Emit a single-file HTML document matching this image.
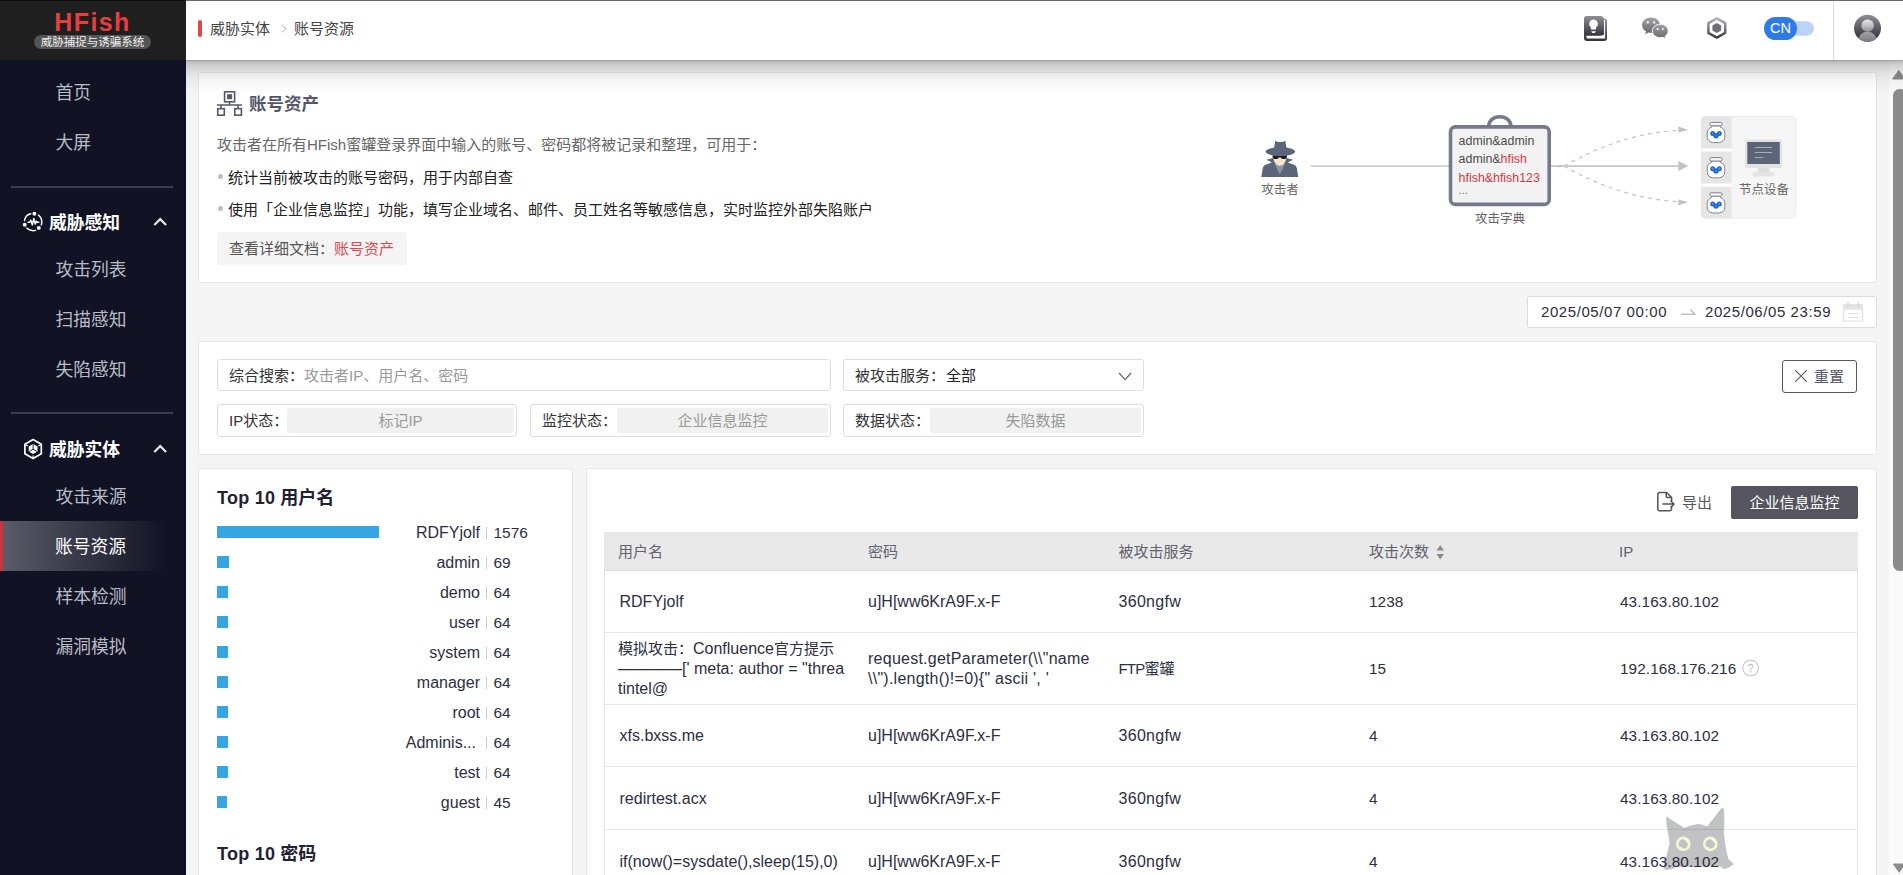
<!DOCTYPE html>
<html lang="zh-CN">
<head>
<meta charset="utf-8">
<title>HFish</title>
<style>
*{box-sizing:border-box;margin:0;padding:0}
html,body{width:1903px;height:875px;overflow:hidden;background:#f5f5f5;font-family:"Liberation Sans","Noto Sans CJK SC",sans-serif;color:#333}
.abs{position:absolute}
/* sidebar */
#side{position:absolute;left:0;top:0;width:186px;height:875px;background:#111223;z-index:5}
#logo{position:absolute;left:0;top:0;width:186px;height:60px;background:#1f1f1f;border-top:1px solid #0d0d0d}
#logo .t{position:absolute;left:-0.5px;width:186px;top:6px;text-align:center;color:#e83e3e;font-weight:bold;font-size:25px;letter-spacing:1.4px;line-height:30px;padding-left:0}
#logo .s{position:absolute;left:34px;top:34.300px;width:117px;height:14px;border-radius:7px;background:#545454;color:#f2f2f2;font-size:11.5px;line-height:14px;text-align:center;white-space:nowrap}
.mi{position:absolute;left:0;width:186px;height:50px;line-height:53px;padding-left:55.500px;font-size:17.800px;color:#b9bcc8;white-space:nowrap}
.mi.act{color:#fff;background:linear-gradient(90deg,#5a5b68 0%,#111223 89%);border-left:3px solid #cc343b;padding-left:52px}
.sep{position:absolute;left:11px;width:162px;height:2px;background:#3b3d4d}
.mh{position:absolute;left:49px;font-size:17.8px;font-weight:bold;color:#fff;line-height:25px;white-space:nowrap}
/* header */
#hdr{position:absolute;left:186px;top:0;width:1717px;height:60px;background:#fff;z-index:4;border-top:1px solid #6a6a6a}
#hdr .bar{position:absolute;left:12px;top:19px;width:4px;height:17px;border-radius:2px;background:#e64545}
#hdr .bc{position:absolute;top:17px;font-size:15px;line-height:22px;color:#444;white-space:nowrap}
/* content */
.sh{position:absolute;left:1px;top:0;right:0;bottom:0}
.card{position:absolute;background:#fff;border:1px solid #e6e6e6;border-radius:3px}

/* card1 */
#c1 .ttl{position:absolute;left:49px;top:18px;font-size:17.5px;font-weight:bold;color:#53576a;line-height:26px;white-space:nowrap}
#c1 .p{position:absolute;left:17px;font-size:15px;line-height:22px;color:#666;white-space:nowrap}
#c1 .li{position:absolute;left:28px;font-size:15px;line-height:22px;color:#222;white-space:nowrap}
#c1 .dot{position:absolute;left:18px;width:5px;height:5px;border-radius:50%;background:#bdbdbd}
#c1 .doc{position:absolute;left:17px;top:159px;width:190px;height:33px;background:#f4f4f4;border-radius:3px;font-size:15px;line-height:33px;padding-left:12px;color:#555;white-space:nowrap}
#c1 .doc span{color:#e0484d}
.dl{position:absolute;font-size:12.5px;line-height:16px;color:#666;white-space:nowrap;text-align:center}
/* date */
#date{position:absolute;left:1527px;top:296px;width:350px;height:32px;background:#fff;border:1px solid #dcdcdc;border-radius:3px}
#date .d{position:absolute;top:4px;font-size:15px;line-height:22px;color:#2b2e3b;white-space:nowrap;letter-spacing:.58px}
/* filters */
.fb{position:absolute;height:33px;border:1px solid #dedede;border-radius:3px;background:#fff;font-size:15px;line-height:31px;white-space:nowrap;color:#333}
.fb .lb{position:absolute;left:11px;top:0}
.fb .ph{position:absolute;top:0;color:#999}
.fb .in{position:absolute;top:3px;height:25px;background:#f1f1f1;border-radius:3px;color:#999;text-align:center;line-height:25.500px}
#reset{position:absolute;left:1582px;top:17px;width:75px;height:33px;border:1px solid #55566a;border-radius:3px;font-size:15px;line-height:31px;color:#53566a;white-space:nowrap}
/* chart */
#c3 .h{position:absolute;left:17px;font-size:18px;font-weight:bold;color:#1f2233;line-height:26px;white-space:nowrap}
.br{position:absolute;left:17px;height:12px;background:#38a5e3}
.tl{letter-spacing:.25px}
.bl{position:absolute;left:149px;width:131px;text-align:right;font-size:16px;line-height:22px;color:#2b2f42;white-space:nowrap}
.bs{position:absolute;left:286px;width:1px;height:12px;background:#ccc}
.bv{position:absolute;left:293.500px;font-size:15.500px;line-height:22px;color:#2b2f42;white-space:nowrap}
/* table */
#tbl{position:absolute;left:17px;top:63px;width:1254px;border:1px solid #e6e6e6;border-bottom:none}
.tr{position:absolute;left:0;width:1252px;border-bottom:1px solid #e6e6e6}
.th{background:#e9e9e9;height:38px;top:0;border-bottom-color:#dedede}
.td{position:absolute;font-size:15px;line-height:20px;color:#2b2f42;white-space:nowrap}
.th .td{color:#5f6270;top:8.500px}
.la{font-size:16px}
.nu{font-size:15.300px;letter-spacing:.1px}
#exp{position:absolute;left:1095px;top:22.700px;font-size:15px;line-height:22px;color:#555;white-space:nowrap}
#mon{position:absolute;left:1144px;top:17px;width:127px;height:33px;background:#555560;border-radius:2px;color:#fff;font-size:15px;line-height:33px;text-align:center;white-space:nowrap}
</style>
</head>
<body>
<div id="side">
  <div id="logo"><div class="t">HFish</div><div class="s">威胁捕捉与诱骗系统</div></div>

  <svg class="abs" style="left:20px;top:208px" width="28" height="28" viewBox="20 208 28 28">
    <circle cx="33.1" cy="222" r="8.7" fill="none" stroke="#fff" stroke-width="1.4" stroke-dasharray="3.500 7 10.560 7 10.840 7 8.800"/>
    <circle cx="34.400" cy="213.800" r="1.950" fill="#fff"/><circle cx="24.700" cy="224.800" r="1.950" fill="#fff"/><circle cx="38.800" cy="227.900" r="1.950" fill="#fff"/>
    <path d="M28 222.3h1.8l1-2.2 1.5 4.8 1.5-6.4 1.5 5.6 1.1-2.8.8 1h1.6" fill="none" stroke="#fff" stroke-width="1.5" stroke-linejoin="round" stroke-linecap="round"/>
  </svg>
  <svg class="abs" style="left:20px;top:436px" width="28" height="28" viewBox="20 436 28 28">
    <path d="M33.1 439.6l8.2 4.7v9.5l-8.2 4.7-8.2-4.7v-9.5z" fill="none" stroke="#fff" stroke-width="1.7" stroke-linejoin="round"/>
    <path d="M33.1 444l4.4 2.5v5.1l-4.4 2.5-4.4-2.5v-5.1z" fill="#fff"/>
    <path d="M33.1 444.2v5l-4 2.3M33.1 449.2l4 2.3" fill="none" stroke="#111223" stroke-width="0.9"/>
    <path d="M25.5 444.7l2.4 1.4M40.7 444.7l-2.4 1.4M33.1 458v-2.6" stroke="#fff" stroke-width="1.2"/>
  </svg>
  <svg class="abs" style="left:150px;top:214px" width="20" height="16" viewBox="150 214 20 16"><path d="M154.3 225l5.9-5.9 5.9 5.9" fill="none" stroke="#e6e6ea" stroke-width="2.2"/></svg>
  <svg class="abs" style="left:150px;top:441px" width="20" height="16" viewBox="150 441 20 16"><path d="M154.3 452l5.9-5.9 5.9 5.9" fill="none" stroke="#e6e6ea" stroke-width="2.2"/></svg>
  <div class="mi" style="top:67px">首页</div>
  <div class="mi" style="top:117px">大屏</div>
  <div class="sep" style="top:186px"></div>
  <div class="mh" style="top:210.500px">威胁感知</div>
  <div class="mi" style="top:244px">攻击列表</div>
  <div class="mi" style="top:294px">扫描感知</div>
  <div class="mi" style="top:344px">失陷感知</div>
  <div class="sep" style="top:412px"></div>
  <div class="mh" style="top:437.500px">威胁实体</div>
  <div class="mi" style="top:471px">攻击来源</div>
  <div class="mi act" style="top:521px">账号资源</div>
  <div class="mi" style="top:571px">样本检测</div>
  <div class="mi" style="top:621px">漏洞模拟</div>
</div>
<div id="hdr">
  <div class="bar"></div>
  <div class="bc" style="left:24px">威胁实体</div>
  <div class="bc" style="left:108px">账号资源</div>
  <svg class="abs" style="left:84px;top:-1px" width="40" height="60" viewBox="270 0 40 60"><path d="M281.600 24.700l4.400 3.800-4.400 3.800" fill="none" stroke="#c8c8c8" stroke-width="1.100"/></svg>
  <svg class="abs" style="left:1390px;top:-1px" width="327" height="60" viewBox="1576 0 327 60">
    <defs>
      <linearGradient id="g1" x1="0" y1="0" x2="0" y2="1"><stop offset="0" stop-color="#8e8e92"/><stop offset="1" stop-color="#33333d"/></linearGradient>
      <linearGradient id="g2" x1="0" y1="0" x2="0" y2="1"><stop offset="0" stop-color="#a3a3a5"/><stop offset="1" stop-color="#66666c"/></linearGradient>
      <linearGradient id="g3" x1="0" y1="0" x2="0" y2="1"><stop offset="0" stop-color="#b4b4b6"/><stop offset="1" stop-color="#3c3c44"/></linearGradient>
      <linearGradient id="g4" x1="0" y1="0" x2="0" y2="1"><stop offset="0" stop-color="#909094"/><stop offset="1" stop-color="#25252f"/></linearGradient>
      <linearGradient id="g5" x1="0" y1="0" x2="0" y2="1"><stop offset="0" stop-color="#ececee"/><stop offset="1" stop-color="#8f8f96"/></linearGradient>
      <linearGradient id="g6" x1="0" y1="0" x2="0" y2="1"><stop offset="0" stop-color="#a2a2a6"/><stop offset="1" stop-color="#55555d"/></linearGradient>
      <clipPath id="av"><circle cx="1867.5" cy="28.3" r="13.5"/></clipPath>
    </defs>
    <!-- book -->
    <rect x="1584" y="18.600" width="23" height="22.400" rx="3" fill="url(#g1)"/>
    <path d="M1586.600 35h17.500v-15h1v18.600h-17.500a1 1 0 0 1 -1-1z" fill="#fff"/>
    <rect x="1584" y="16" width="19.400" height="19.800" rx="2.800" fill="url(#g1)"/>
    <path d="M1593.5 19.5a4.4 4.4 0 0 1 2.6 7.9v2.2h-5.2v-2.2a4.4 4.4 0 0 1 2.6-7.9zM1591.2 31.2h4.6l-1 1.8h-2.6z" fill="#fff"/>
    <!-- wechat -->
    <path d="M1651 17.6c5 0 9 3.4 9 7.6s-4 7.6-9 7.6c-.9 0-1.800-.1-2.600-.300l-3.200 1.800.800-2.900c-2.400-1.400-4-3.600-4-6.200 0-4.200 4-7.600 9-7.600z" fill="url(#g2)"/>
    <path d="M1660.300 24.200c4.400 0 8 3 8 6.800 0 2.200-1.300 4.200-3.300 5.400l.700 2.500-2.800-1.500c-.8.200-1.700.300-2.600.300-4.400 0-8-3-8-6.700s3.600-6.800 8-6.800z" fill="url(#g2)" stroke="#fff" stroke-width="1"/>
    <circle cx="1647.800" cy="22.500" r="1.150" fill="#fff"/><circle cx="1654.200" cy="22.500" r="1.150" fill="#fff"/>
    <circle cx="1657.600" cy="29" r="1" fill="#fff"/><circle cx="1662.900" cy="29" r="1" fill="#fff"/>
    <!-- hexagon -->
    <path d="M1716.800 18.300l8.400 4.800v9.700l-8.400 4.800-8.400-4.800v-9.700z" fill="none" stroke="url(#g3)" stroke-width="2.500" stroke-linejoin="round"/>
    <path d="M1716.800 22.900l4.400 2.550v5.100l-4.400 2.550-4.400-2.550v-5.100z" fill="#6e6e74"/>
    <!-- toggle -->
    <rect x="1780" y="21.300" width="34" height="14.400" rx="7.200" fill="#bdd3f5"/>
    <rect x="1764" y="17" width="33" height="23" rx="11.500" fill="#2f7be6"/>
    <text x="1780.500" y="33.300" font-family="Liberation Sans, sans-serif" font-size="14.500" fill="#fff" text-anchor="middle">CN</text>
    <!-- divider -->
    <rect x="1833" y="1" width="1" height="59" fill="#dedede"/>
    <!-- avatar -->
    <circle cx="1867.500" cy="28.300" r="13.500" fill="url(#g4)"/>
    <g clip-path="url(#av)"><ellipse cx="1867.500" cy="41.500" rx="9.600" ry="10" fill="url(#g6)"/></g>
    <circle cx="1867.600" cy="25.700" r="6.200" fill="url(#g5)"/>
  </svg>

</div>
<div class="abs" style="left:186px;top:60px;width:1717px;height:40px;z-index:8;pointer-events:none;background:linear-gradient(to bottom,rgba(0,0,0,.40) 0,rgba(0,0,0,.25) 1.2px,rgba(0,0,0,.215) 2.5px,rgba(0,0,0,.155) 6px,rgba(0,0,0,.10) 11px,rgba(0,0,0,.075) 14px,rgba(0,0,0,.043) 20px,rgba(0,0,0,.012) 30px,rgba(0,0,0,0) 38px)"></div>
<div class="abs" style="left:186px;top:60px;width:3px;height:815px;background:#f3f5f8"></div>
<div id="main">
  <div class="card" id="c1" style="left:198px;top:72px;width:1679px;height:211px"><div class="sh">
    <div class="ttl">账号资产</div>
    <div class="p" style="top:61px">攻击者在所有HFish蜜罐登录界面中输入的账号、密码都将被记录和整理，可用于：</div>
    <div class="dot" style="top:100.5px"></div><div class="li" style="top:94px">统计当前被攻击的账号密码，用于内部自查</div>
    <div class="dot" style="top:133px"></div><div class="li" style="top:126px">使用「企业信息监控」功能，填写企业域名、邮件、员工姓名等敏感信息，实时监控外部失陷账户</div>
    <div class="doc">查看详细文档：<span>账号资产</span></div>

    <svg class="abs" style="left:1040px;top:32px" width="580" height="125" viewBox="1240 105 580 125">
      <!-- attacker -->
      <path d="M1261.300 177.100l1.500-9.200q.400-2.300 2.800-3.200l6.300-2.300-5.400-2.700 6.500-1.700 6.800 6.800 6.800-6.800 6.500 1.700-5.400 2.700 6.300 2.300q2.400.900 2.800 3.200l1.500 9.200z" fill="#5b6579"/>
      <path d="M1274.500 163.800l5.300 10.800 5.300-10.800z" fill="#8c95a8"/>
      <path d="M1273.200 156.500c0 5 2.800 9.200 6.600 9.200s6.600-4.200 6.600-9.200z" fill="#f4e4c9"/>
      <path d="M1272.600 155.300h14.400v1.400c0 1.500-1.200 2.400-3 2.400-1.500 0-2.600-.600-3.300-1.700h-1.800c-.700 1.100-1.800 1.700-3.300 1.700-1.800 0-3-.900-3-2.400z" fill="#1e1e24"/>
      <ellipse cx="1280.400" cy="151.600" rx="14.700" ry="4.400" fill="#5b6579"/>
      <path d="M1273.600 151l1.700-10.200 2.600 1.200h4.800l2.600-1.200 1.800 10.200z" fill="#5b6579"/>
      <!-- lines -->
      <path d="M1310.800 166.100H1449" stroke="#cdcdcd" stroke-width="1.600"/>
      <path d="M1551 166.100H1679" stroke="#c6c6c6" stroke-width="1.600"/>
      <path d="M1678.300 161.100l10 5-10 5z" fill="#c2c2c2"/>
      <rect x="1558.600" y="165" width="2.200" height="2.200" fill="#c2c2c2"/>
      <path d="M1564 166.100Q1622 133 1678 130.600" fill="none" stroke="#c4c4c4" stroke-width="1.200" stroke-dasharray="4 4.200"/>
      <path d="M1564 166.100Q1622 199 1678 201.400" fill="none" stroke="#c4c4c4" stroke-width="1.200" stroke-dasharray="4 4.200"/>
      <path d="M1678.300 126.600l10 3.400-10 2.400z" fill="#c2c2c2"/>
      <path d="M1678.300 205.400l10-3.400-10-2.400z" fill="#c2c2c2"/>
      <!-- dictionary -->
      <path d="M1488.800 126c0-5.600 4.600-9.200 11-9.200s11 3.600 11 9.200" fill="none" stroke="#747a8b" stroke-width="3.600"/>
      <rect x="1450.500" y="126.900" width="98.700" height="77.500" rx="5" fill="#f2f2f2" stroke="#747a8b" stroke-width="3.600"/>
      <g font-family="Liberation Sans, sans-serif" font-size="12.400">
        <text x="1458.600" y="144.800" fill="#4a4a4a">admin&amp;admin</text>
        <text x="1458.600" y="163.400" fill="#4a4a4a">admin&amp;<tspan fill="#d9363e">hfish</tspan></text>
        <text x="1458.600" y="182.200" fill="#d9363e">hfish&amp;hfish123</text>
        <text x="1458.600" y="193.600" fill="#666" font-size="11">...</text>
      </g>
      <!-- nodes -->
      <rect x="1701.500" y="116.500" width="94.200" height="101.700" rx="4" fill="#f6f6f6" stroke="#ebebeb" stroke-width="1"/>
      <path d="M1705 116.300h26.500v32.200h-30.300v-28.400a3.800 3.800 0 0 1 3.800-3.800z" fill="#e6e6e6"/>
      <rect x="1701.200" y="151.400" width="30.300" height="32.200" fill="#e6e6e6"/>
      <path d="M1701.200 186.800h30.300v31.600h-26.500a3.800 3.800 0 0 1 -3.800-3.800z" fill="#e6e6e6"/>
      <rect x="1701" y="148.600" width="30.500" height="2.700" fill="#fff"/><rect x="1701" y="183.700" width="30.500" height="2.900" fill="#fff"/>
      <g transform="translate(1716 132.400)">
      <path d="M-4.400 -6.600h8.800v1.400c3 1 4.400 3.200 4.400 6v3c0 4-2.600 6.400-6.400 6.400h-4.800c-3.800 0-6.400-2.400-6.400-6.400v-3c0-2.800 1.400-5 4.400-6z" fill="#fff" stroke="#80838b" stroke-width="1"/>
      <rect x="-6" y="-10" width="12" height="3.400" rx="1.200" fill="#f6f6f6" stroke="#80838b" stroke-width="1"/>
      <circle cx="-3.300" cy="1.100" r="2.500" fill="#2364cf"/><circle cx="3.300" cy="1.100" r="2.500" fill="#2364cf"/><circle cx="0" cy="3.300" r="2.700" fill="#2364cf"/>
      <circle cx="-3.300" cy="1.100" r="1.100" fill="#4d92f2"/><circle cx="3.300" cy="1.100" r="1.100" fill="#4d92f2"/><circle cx="0" cy="3.300" r="1.100" fill="#3b7fe6"/>
    </g> <g transform="translate(1716 167.600)">
      <path d="M-4.400 -6.600h8.800v1.400c3 1 4.400 3.200 4.400 6v3c0 4-2.600 6.400-6.400 6.400h-4.800c-3.800 0-6.400-2.400-6.400-6.400v-3c0-2.800 1.400-5 4.400-6z" fill="#fff" stroke="#80838b" stroke-width="1"/>
      <rect x="-6" y="-10" width="12" height="3.400" rx="1.200" fill="#f6f6f6" stroke="#80838b" stroke-width="1"/>
      <circle cx="-3.300" cy="1.100" r="2.500" fill="#2364cf"/><circle cx="3.300" cy="1.100" r="2.500" fill="#2364cf"/><circle cx="0" cy="3.300" r="2.700" fill="#2364cf"/>
      <circle cx="-3.300" cy="1.100" r="1.100" fill="#4d92f2"/><circle cx="3.300" cy="1.100" r="1.100" fill="#4d92f2"/><circle cx="0" cy="3.300" r="1.100" fill="#3b7fe6"/>
    </g> <g transform="translate(1716 202.800)">
      <path d="M-4.400 -6.600h8.800v1.400c3 1 4.400 3.200 4.400 6v3c0 4-2.600 6.400-6.400 6.400h-4.800c-3.800 0-6.400-2.400-6.400-6.400v-3c0-2.800 1.400-5 4.400-6z" fill="#fff" stroke="#80838b" stroke-width="1"/>
      <rect x="-6" y="-10" width="12" height="3.400" rx="1.200" fill="#f6f6f6" stroke="#80838b" stroke-width="1"/>
      <circle cx="-3.300" cy="1.100" r="2.500" fill="#2364cf"/><circle cx="3.300" cy="1.100" r="2.500" fill="#2364cf"/><circle cx="0" cy="3.300" r="2.700" fill="#2364cf"/>
      <circle cx="-3.300" cy="1.100" r="1.100" fill="#4d92f2"/><circle cx="3.300" cy="1.100" r="1.100" fill="#4d92f2"/><circle cx="0" cy="3.300" r="1.100" fill="#3b7fe6"/>
    </g>
      <!-- monitor -->
      <rect x="1745" y="139.600" width="37" height="28.300" rx="1.500" fill="#e3e3e3"/>
      <rect x="1747.300" y="142" width="32.500" height="22" fill="#5c6477"/>
      <path d="M1754.800 147.500h17.500M1754.800 152.500h17.500M1754.800 157.600h8.600" stroke="#a9aebb" stroke-width="1"/>
      <rect x="1757.800" y="167.800" width="11.800" height="5" fill="#dedede"/>
      <rect x="1752.400" y="172" width="22.400" height="4.400" rx="2.200" fill="#e3e3e3"/>
    </svg>
    <svg class="abs" style="left:15px;top:16px" width="30" height="30" viewBox="215 89 30 30">
      <g fill="none" stroke="#555866" stroke-width="1.600">
        <rect x="224.600" y="91.800" width="10" height="10"/>
        <rect x="217.700" y="108.700" width="6.600" height="6.500"/>
        <rect x="234.800" y="108.700" width="6.600" height="6.500"/>
        <path d="M216.900 105h25.100M229.600 102v3M221 105v3.700M238.100 105v3.700"/>
      </g>
      <rect x="227.100" y="94.200" width="5" height="5" fill="#555866"/>
    </svg>
    <div class="dl" style="left:1050px;top:109.4px;width:60px">攻击者</div>
    <div class="dl" style="left:1260px;top:138.2px;width:80px">攻击字典</div>
    <div class="dl" style="left:1524px;top:108.5px;width:80px">节点设备</div>
  </div></div>
  <div id="date"><div class="d" style="left:13px">2025/05/07 00:00</div><div class="d" style="left:177px">2025/06/05 23:59</div><svg class="abs" style="left:150px;top:0" width="190" height="30" viewBox="1678 297 190 30">
    <path d="M1680.800 314.300h13.900l-4.200-4.700" fill="none" stroke="#c2c2c2" stroke-width="1.500"/>
    <rect x="1843.700" y="304.500" width="18.800" height="16.600" fill="#fff" stroke="#dcdcdc" stroke-width="1"/>
    <rect x="1843.200" y="304" width="19.800" height="5.700" fill="#e4e4e4"/>
    <rect x="1847.300" y="302" width="1.400" height="5" fill="#d8d8d8"/><rect x="1857.600" y="302" width="1.400" height="5" fill="#d8d8d8"/>
    <path d="M1847.900 313.700h10.400M1847.900 317.500h10.400" stroke="#dcdcdc" stroke-width="1.100"/>
  </svg></div>
  <div class="card" id="c2" style="left:198px;top:341px;width:1679px;height:114px"><div class="sh" style="top:1px">
    <div class="fb" style="left:17px;top:16px;width:614px;height:32px"><span class="lb">综合搜索：</span><span class="ph" style="left:86px">攻击者IP、用户名、密码</span></div>
    <div class="fb" style="left:643px;top:16px;width:301px;height:32px"><span class="lb">被攻击服务：</span><span class="ph" style="left:102px;color:#222">全部</span><svg class="abs" style="left:268.500px;top:7.500px" width="20" height="14" viewBox="1113 367 20 14"><path d="M1119.100 372l6 6.600 6-6.600" fill="none" stroke="#666" stroke-width="1.200"/></svg></div>
    <div class="fb" style="left:17px;top:61px;width:300px"><span class="lb">IP状态：</span><div class="in" style="left:69px;width:227px">标记IP</div></div>
    <div class="fb" style="left:330px;top:61px;width:301px"><span class="lb">监控状态：</span><div class="in" style="left:86px;width:211px">企业信息监控</div></div>
    <div class="fb" style="left:643px;top:61px;width:301px"><span class="lb">数据状态：</span><div class="in" style="left:86px;width:211px">失陷数据</div></div>
    <div id="reset"><svg class="abs" style="left:10px;top:7px" width="16" height="16" viewBox="1793 368 16 16"><path d="M1795.200 370.200l11.600 11.600M1806.800 370.200l-11.600 11.600" stroke="#55566a" stroke-width="1.100"/></svg><span style="position:absolute;left:31px">重置</span></div>
  </div></div>
  <div class="card" id="c3" style="left:198px;top:468px;width:375px;height:420px"><div class="sh">
    <div class="h" style="top:16px"><span class="tl">Top 10</span> 用户名</div>
    <div class="h" style="top:372px"><span class="tl">Top 10</span> 密码</div>
    <div class="br" style="top:57px;width:162px"></div><div class="bl" style="top:53px"><span class="la">RDFYjolf</span></div><div class="bs" style="top:58px"></div><div class="bv" style="top:53px">1576</div>
    <div class="br" style="top:87px;width:12px"></div><div class="bl" style="top:83px">admin</div><div class="bs" style="top:88px"></div><div class="bv" style="top:83px">69</div>
    <div class="br" style="top:117px;width:11px"></div><div class="bl" style="top:113px">demo</div><div class="bs" style="top:118px"></div><div class="bv" style="top:113px">64</div>
    <div class="br" style="top:147px;width:11px"></div><div class="bl" style="top:143px">user</div><div class="bs" style="top:148px"></div><div class="bv" style="top:143px">64</div>
    <div class="br" style="top:177px;width:11px"></div><div class="bl" style="top:173px">system</div><div class="bs" style="top:178px"></div><div class="bv" style="top:173px">64</div>
    <div class="br" style="top:207px;width:11px"></div><div class="bl" style="top:203px">manager</div><div class="bs" style="top:208px"></div><div class="bv" style="top:203px">64</div>
    <div class="br" style="top:237px;width:11px"></div><div class="bl" style="top:233px">root</div><div class="bs" style="top:238px"></div><div class="bv" style="top:233px">64</div>
    <div class="br" style="top:267px;width:11px"></div><div class="bl" style="top:263px;width:127px">Adminis...</div><div class="bs" style="top:268px"></div><div class="bv" style="top:263px">64</div>
    <div class="br" style="top:297px;width:11px"></div><div class="bl" style="top:293px">test</div><div class="bs" style="top:298px"></div><div class="bv" style="top:293px">64</div>
    <div class="br" style="top:327px;width:10px"></div><div class="bl" style="top:323px">guest</div><div class="bs" style="top:328px"></div><div class="bv" style="top:323px">45</div>
    
  </div></div>
  <div class="card" id="c4" style="left:586px;top:468px;width:1291px;height:420px">
    <svg class="abs" style="left:1067px;top:20.300px" width="24" height="24" viewBox="1654 489 24 24"><path d="M1671.600 502v-4.400l-4.900-5h-7.200a1.700 1.700 0 0 0 -1.700 1.700v14.800a1.700 1.700 0 0 0 1.700 1.700h10.400a1.700 1.700 0 0 0 1.700-1.700v-1.600M1666.300 492.800v3.600a1.200 1.200 0 0 0 1.200 1.200h3.800M1662.400 504.100h11.400M1670.400 500.500l3.600 3.600-3.600 3.600" fill="none" stroke="#555" stroke-width="1.500" stroke-linejoin="round"/></svg><div id="exp">导出</div>
    <div id="mon">企业信息监控</div>
    <div id="tbl" style="height:360px">
      <div class="tr th"><div class="td" style="left:13px">用户名</div><div class="td" style="left:263px">密码</div><div class="td" style="left:513.5px">被攻击服务</div><div class="td" style="left:764px">攻击次数</div><svg class="abs" style="left:829px;top:10px" width="12" height="20" viewBox="1433 543 12 20"><path d="M1435.400 550.500l3.800-5.300 3.800 5.300zM1435.400 554l3.800 5.400 3.800-5.400z" fill="#8a8a8a"/></svg><div class="td" style="left:1014px">IP</div></div>
      <div class="tr" style="top:38px;height:62px"><div class="td" style="left:14.5px;top:21px"><span class="la">RDFYjolf</span></div><div class="td" style="left:263px;top:21px"><span class="la">u]H[ww6KrA9F.x-F</span></div><div class="td" style="left:513.5px;top:21px"><span class="la" style="letter-spacing:.3px">360ngfw</span></div><div class="td" style="left:764px;top:21px"><span class="nu">1238</span></div><div class="td" style="left:1015px;top:21px"><span class="nu">43.163.80.102</span></div></div>
      <div class="tr" style="top:100px;height:72px"><div class="td" style="left:13px;top:6px">模拟攻击：<span class="la">Confluence</span>官方提示<br><span class="la">————[' meta: author = "threa</span><br><span class="la">tintel@</span></div><div class="td" style="left:263px;top:16px"><span class="la" style="letter-spacing:.25px">request.getParameter(\\"name<br>\\").length()!=0){" ascii ', '</span></div><div class="td" style="left:513.5px;top:26px"><span style="letter-spacing:-.8px">FTP</span>蜜罐</div><div class="td" style="left:764px;top:26px"><span class="nu">15</span></div><div class="td" style="left:1015px;top:26px"><span class="nu">192.168.176.216</span></div><svg class="abs" style="left:1135px;top:24px" width="22" height="22" viewBox="1740 657 22 22"><circle cx="1750.600" cy="668" r="7.800" fill="none" stroke="#c6c6c6" stroke-width="1.100"/><text x="1750.600" y="672" font-family="Liberation Sans, sans-serif" font-size="11" fill="#b8b8b8" text-anchor="middle">?</text></svg></div>
      <div class="tr" style="top:172px;height:62px"><div class="td" style="left:14.5px;top:21px"><span class="la">xfs.bxss.me</span></div><div class="td" style="left:263px;top:21px"><span class="la">u]H[ww6KrA9F.x-F</span></div><div class="td" style="left:513.5px;top:21px"><span class="la" style="letter-spacing:.3px">360ngfw</span></div><div class="td" style="left:764px;top:21px"><span class="nu">4</span></div><div class="td" style="left:1015px;top:21px"><span class="nu">43.163.80.102</span></div></div>
      <div class="tr" style="top:234px;height:63px"><div class="td" style="left:14.5px;top:22px"><span class="la">redirtest.acx</span></div><div class="td" style="left:263px;top:22px"><span class="la">u]H[ww6KrA9F.x-F</span></div><div class="td" style="left:513.5px;top:22px"><span class="la" style="letter-spacing:.3px">360ngfw</span></div><div class="td" style="left:764px;top:22px"><span class="nu">4</span></div><div class="td" style="left:1015px;top:22px"><span class="nu">43.163.80.102</span></div></div>
      <div class="tr" style="top:297px;height:62px"><div class="td" style="left:14.5px;top:21.500px"><span class="la">if(now()=sysdate(),sleep(15),0)</span></div><div class="td" style="left:263px;top:21.500px"><span class="la">u]H[ww6KrA9F.x-F</span></div><div class="td" style="left:513.5px;top:21.500px"><span class="la" style="letter-spacing:.3px">360ngfw</span></div><div class="td" style="left:764px;top:21.500px"><span class="nu">4</span></div><div class="td" style="left:1015px;top:21.500px"><span class="nu">43.163.80.102</span></div></div>

    </div>
  </div>
</div>

<div class="abs" style="left:1889px;top:60px;width:14px;height:815px;background:#fafafa;z-index:3"></div>
<svg class="abs" style="left:1889px;top:60px;z-index:6" width="14" height="815" viewBox="1889 60 14 815">
  <path d="M1892.600 79l6.200-8.600 6.200 8.600z" fill="#8b8b8b" stroke="#8b8b8b" stroke-width="1" stroke-linejoin="round"/>
  <rect x="1893" y="89" width="14" height="482" rx="6.500" fill="#8b8b8b"/>
  <path d="M1893.400 864l5.800 8.300 5.800-8.300z" fill="#8b8b8b" stroke="#8b8b8b" stroke-width="1" stroke-linejoin="round"/>
</svg>
<svg class="abs" style="left:1660px;top:800px;z-index:7" width="80" height="75" viewBox="1660 800 80 75">
  <g opacity=".265">
  <path d="M1666.600 817.100L1684.100 828.300Q1689 825.800 1697.900 824.400Q1703 824.600 1707.300 827L1721.900 808.100Q1723.300 808 1723.600 809.500L1724 821.400L1723.600 834.300L1724.400 841.100L1726.100 851.400L1727.900 859.100L1733.400 863.900L1727.900 867.700L1723.600 868.600L1720.100 866L1674.700 866.900L1673.400 868.600L1665.300 869.400L1663.600 867.700L1666.100 860L1667.900 851.400L1670 842.900L1668.700 834.300L1667 825.700Z" fill="#1c1d26" stroke="#1c1d26" stroke-width=".800" stroke-linejoin="round"/>
  <circle cx="1683.300" cy="843.900" r="6" fill="#23242c" stroke="#d6e84a" stroke-width="2.600"/>
  <circle cx="1710.300" cy="843.900" r="6" fill="#23242c" stroke="#d6e84a" stroke-width="2.600"/>
  <path d="M1685.200 839.400a5 5 0 0 1 2.600 3.400M1712.200 839.400a5 5 0 0 1 2.600 3.400" fill="none" stroke="#fff" stroke-width="1.200" stroke-linecap="round"/>
  <circle cx="1680.800" cy="847.800" r=".900" fill="#fff"/><circle cx="1707.800" cy="847.800" r=".900" fill="#fff"/>
  </g>
</svg>
</body>
</html>
